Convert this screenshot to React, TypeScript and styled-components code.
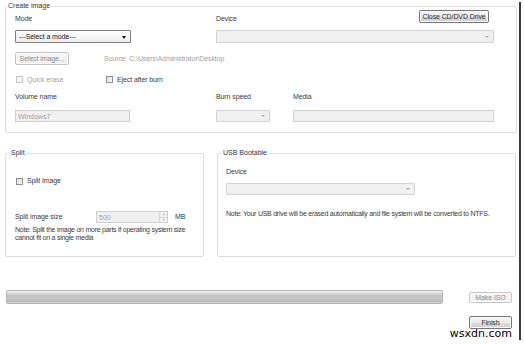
import React from "react";
import styled, { createGlobalStyle } from "styled-components";

const Global = createGlobalStyle`
  html, body { margin: 0; padding: 0; background: #fff; }
  body {
    font-family: "Liberation Sans", Arial, sans-serif;
    font-size: 7px;
    color: #3a3a3a;
  }
  * { box-sizing: border-box; }
`;

const Screen = styled.div`
  position: relative;
  width: 519px;
  height: 340px;
  background: #fff;
  box-shadow: 2px 2px 0 #3a3a3a;
  padding: 2px 2px 0 5px;
  display: flex;
  flex-direction: column;
`;

const Group = styled.fieldset<{ $w?: number }>`
  margin: 0;
  padding: 0;
  min-width: 0;
  flex: none;
  border: 1px solid #dddddd;
  border-radius: 2px;
  ${(p) => (p.$w ? `width: ${p.$w}px;` : "flex: 1 1 0;")}
`;

const Legend = styled.legend<{ $off: number }>`
  margin-left: ${(p) => p.$off}px;
  padding: 0 1px;
  font-size: 7px;
  line-height: 8px;
  color: #333;
`;

const GroupBody = styled.div<{ $pl: number; $pr: number; $pb: number }>`
  display: flex;
  flex-direction: column;
  padding: 0 ${(p) => p.$pr}px ${(p) => p.$pb}px ${(p) => p.$pl}px;
`;

const FieldRow = styled.div<{ $mt: number; $h: number; $align?: string }>`
  display: flex;
  align-items: ${(p) => p.$align ?? "center"};
  margin-top: ${(p) => p.$mt}px;
  height: ${(p) => p.$h}px;
`;

const Cell = styled.div<{ $w?: number; $align?: string }>`
  display: flex;
  align-items: ${(p) => p.$align ?? "center"};
  height: 100%;
  ${(p) => (p.$w ? `width: ${p.$w}px; flex: none;` : "flex: 1;")}
`;

const HeaderCell = styled(Cell)`
  justify-content: space-between;
  align-items: flex-end;
`;

const Label = styled.span<{ $muted?: boolean }>`
  font-size: 7px;
  line-height: 8px;
  letter-spacing: -0.1px;
  white-space: nowrap;
  color: ${(p) => (p.$muted ? "#a2a2a2" : "#3a3a3a")};
`;

const BottomLabel = styled(Label)`
  margin-bottom: 1px;
`;

const Button = styled.div<{ $w: number; $h: number; $disabled?: boolean }>`
  width: ${(p) => p.$w}px;
  height: ${(p) => p.$h}px;
  flex: none;
  display: flex;
  align-items: center;
  justify-content: center;
  font-size: 7px;
  letter-spacing: -0.1px;
  white-space: nowrap;
  border-radius: 2px;
  border: 1px solid ${(p) => (p.$disabled ? "#c4c4c4" : "#767676")};
  color: ${(p) => (p.$disabled ? "#8c8c8c" : "#2a2a2a")};
  background: ${(p) =>
    p.$disabled
      ? "linear-gradient(#f7f7f7, #efefef)"
      : "linear-gradient(#f4f4f4 0%, #ebebeb 50%, #dddddd 51%, #cfcfcf 100%)"};
  box-shadow: inset 0 0 0 1px #fbfbfb;
`;

const TopButton = styled(Button)`
  align-self: flex-start;
  margin-right: 5px;
`;

const EndButton = styled(Button)`
  margin-left: auto;
  margin-right: 5px;
`;

const Combo = styled.div<{ $w: number; $active?: boolean }>`
  position: relative;
  width: ${(p) => p.$w}px;
  height: 100%;
  flex: none;
  display: flex;
  align-items: center;
  padding-left: 3px;
  font-size: 7px;
  letter-spacing: -0.1px;
  border: 1px solid ${(p) => (p.$active ? "#7f7f7f" : "#d2d2d2")};
  border-radius: 1px;
  background: ${(p) =>
    p.$active ? "linear-gradient(#fdfdfd, #ededed)" : "#f0f0f0"};
  color: #222;
`;

const Triangle = styled.span<{ $active?: boolean }>`
  position: absolute;
  right: 4px;
  top: 50%;
  margin-top: -1px;
  width: 0;
  height: 0;
  border-left: ${(p) => (p.$active ? 2.5 : 2)}px solid transparent;
  border-right: ${(p) => (p.$active ? 2.5 : 2)}px solid transparent;
  border-top: ${(p) => (p.$active ? 3 : 2)}px solid
    ${(p) => (p.$active ? "#111" : "#b0b0b0")};
`;

const TextInput = styled.div<{ $w: number }>`
  width: ${(p) => p.$w}px;
  height: 100%;
  flex: none;
  display: flex;
  align-items: center;
  padding-left: 2px;
  font-size: 7px;
  color: #a0a0a0;
  border: 1px solid #cfcfcf;
  background: #f0f0f0;
`;

const Spinner = styled(TextInput)`
  position: relative;
`;

const SpinButtons = styled.div`
  position: absolute;
  right: 0;
  top: 0;
  bottom: 0;
  width: 8px;
  display: flex;
  flex-direction: column;
  border-left: 1px solid #d8d8d8;
`;

const SpinHalf = styled.div<{ $up?: boolean }>`
  flex: 1;
  display: flex;
  align-items: center;
  justify-content: center;
  border-bottom: ${(p) => (p.$up ? "1px solid #d8d8d8" : "none")};
  &::after {
    content: "";
    width: 0;
    height: 0;
    border-left: 1.5px solid transparent;
    border-right: 1.5px solid transparent;
    ${(p) =>
      p.$up
        ? "border-bottom: 2px solid #b5b5b5;"
        : "border-top: 2px solid #b5b5b5;"}
  }
`;

const CheckItem = styled.div<{ $w?: number }>`
  display: flex;
  align-items: center;
  gap: 4px;
  padding-left: 1px;
  ${(p) => (p.$w ? `width: ${p.$w}px;` : "")}
`;

const Box = styled.span<{ $muted?: boolean }>`
  width: 7px;
  height: 7px;
  flex: none;
  border: 1px solid ${(p) => (p.$muted ? "#c6c6c6" : "#8e8f8f")};
  background: ${(p) =>
    p.$muted ? "#f4f4f4" : "linear-gradient(135deg, #dcdcdc, #fbfbfb)"};
`;

const Source = styled(Label)`
  margin-left: 35px;
`;

const Unit = styled(Label)`
  margin-left: 7px;
`;

const Note = styled.p<{ $mt: number; $w?: number }>`
  margin: ${(p) => p.$mt}px 0 0;
  font-size: 7px;
  line-height: 8px;
  letter-spacing: -0.25px;
  color: #3a3a3a;
  ${(p) => (p.$w ? `width: ${p.$w}px;` : "white-space: nowrap;")}
`;

const BottomRow = styled.div`
  display: flex;
  gap: 13px;
  margin-top: 16px;
  margin-right: 1px;
`;

const ProgressRow = styled.div`
  display: flex;
  align-items: center;
  margin-top: 33px;
  height: 14px;
`;

const Progress = styled.div`
  width: 437px;
  height: 14px;
  margin-left: 1px;
  border: 1px solid #b4b4b4;
  border-radius: 2px;
  background: linear-gradient(
    #f2f2f2 0%,
    #e2e2e2 18%,
    #c9c9c9 30%,
    #c4c4c4 70%,
    #bcbcbc 88%,
    #d6d6d6 100%
  );
`;

const FinishRow = styled.div`
  display: flex;
  margin-top: 12px;
  height: 13px;
`;

const Watermark = styled.span`
  position: absolute;
  right: 7px;
  bottom: 1px;
  font-family: "DejaVu Sans", Verdana, sans-serif;
  font-size: 11px;
  line-height: 11px;
  color: #000;
`;

export default function App() {
  return (
    <>
      <Global />
      <Screen>
        <Group $w={512}>
          <Legend $off={1}>Create image</Legend>
          <GroupBody $pl={9} $pr={22} $pb={10}>
            <FieldRow $mt={0} $h={14} $align="flex-end">
              <Cell $w={201} $align="flex-end">
                <BottomLabel>Mode</BottomLabel>
              </Cell>
              <HeaderCell>
                <BottomLabel>Device</BottomLabel>
                <TopButton $w={70} $h={13}>
                  Close CD/DVD Drive
                </TopButton>
              </HeaderCell>
            </FieldRow>
            <FieldRow $mt={6} $h={13}>
              <Cell $w={201}>
                <Combo $w={116} $active>
                  ---Select a mode---
                  <Triangle $active />
                </Combo>
              </Cell>
              <Cell>
                <Combo $w={278}>
                  <Triangle />
                </Combo>
              </Cell>
            </FieldRow>
            <FieldRow $mt={9} $h={13}>
              <Button $w={54} $h={13} $disabled>
                Select image...
              </Button>
              <Source $muted>Source: C:\Users\Administrator\Desktop</Source>
            </FieldRow>
            <FieldRow $mt={10} $h={9}>
              <CheckItem $w={90}>
                <Box $muted />
                <Label $muted>Quick erase</Label>
              </CheckItem>
              <CheckItem>
                <Box />
                <Label>Eject after burn</Label>
              </CheckItem>
            </FieldRow>
            <FieldRow $mt={9} $h={8}>
              <Cell $w={201}>
                <Label>Volume name</Label>
              </Cell>
              <Cell $w={77}>
                <Label>Burn speed</Label>
              </Cell>
              <Cell>
                <Label>Media</Label>
              </Cell>
            </FieldRow>
            <FieldRow $mt={9} $h={12}>
              <Cell $w={201}>
                <TextInput $w={115}>Windows7</TextInput>
              </Cell>
              <Cell $w={77}>
                <Combo $w={54}>
                  <Triangle />
                </Combo>
              </Cell>
              <Cell>
                <TextInput $w={201} />
              </Cell>
            </FieldRow>
          </GroupBody>
        </Group>

        <BottomRow>
          <Group $w={199}>
            <Legend $off={4}>Split</Legend>
            <GroupBody $pl={9} $pr={6} $pb={14}>
              <FieldRow $mt={20} $h={8}>
                <CheckItem>
                  <Box />
                  <Label>Split Image</Label>
                </CheckItem>
              </FieldRow>
              <FieldRow $mt={26} $h={12}>
                <Cell $w={81}>
                  <Label>Split image size</Label>
                </Cell>
                <Spinner $w={72}>
                  500
                  <SpinButtons>
                    <SpinHalf $up />
                    <SpinHalf />
                  </SpinButtons>
                </Spinner>
                <Unit>MB</Unit>
              </FieldRow>
              <Note $mt={3} $w={174}>
                Note: Split the image on more parts if operating system size
                cannot fit on a single media
              </Note>
            </GroupBody>
          </Group>

          <Group>
            <Legend $off={4}>USB Bootable</Legend>
            <GroupBody $pl={8} $pr={8} $pb={10}>
              <FieldRow $mt={11} $h={8}>
                <Label>Device</Label>
              </FieldRow>
              <FieldRow $mt={7} $h={12}>
                <Combo $w={189}>
                  <Triangle />
                </Combo>
              </FieldRow>
              <Note $mt={15}>
                Note: Your USB drive will be erased automatically and file
                system will be converted to NTFS.
              </Note>
            </GroupBody>
          </Group>
        </BottomRow>

        <ProgressRow>
          <Progress />
          <EndButton $w={43} $h={11} $disabled>
            Make ISO
          </EndButton>
        </ProgressRow>

        <FinishRow>
          <EndButton $w={43} $h={13}>
            Finish
          </EndButton>
        </FinishRow>

        <Watermark>wsxdn.com</Watermark>
      </Screen>
    </>
  );
}
